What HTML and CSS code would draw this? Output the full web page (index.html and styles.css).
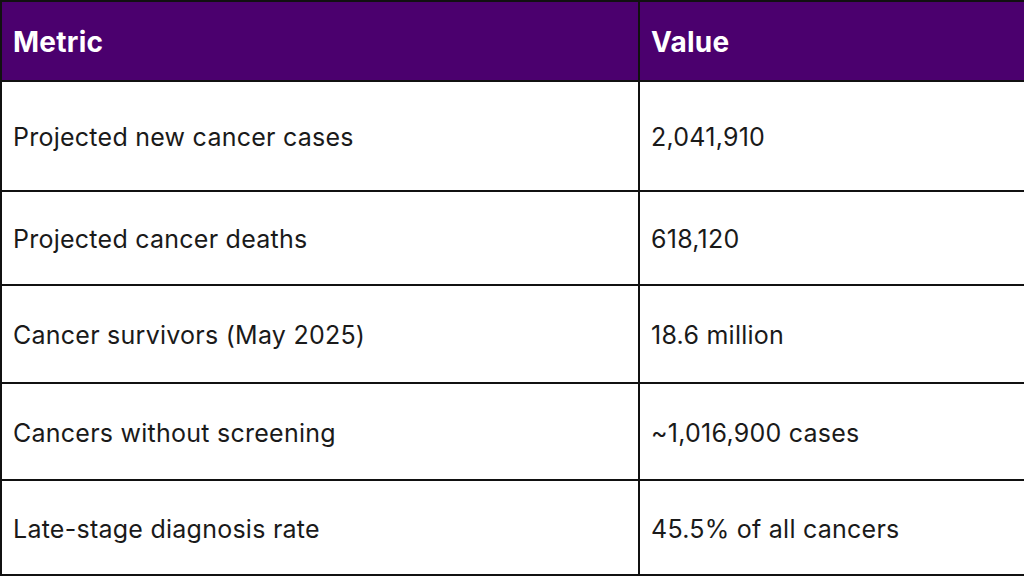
FILE: index.html
```html
<!DOCTYPE html>
<html lang="en">
<head>
<meta charset="utf-8">
<title>Cancer statistics</title>
<link rel="stylesheet" href="styles.css">
</head>
<body>
<table class="stats">
  <colgroup><col class="c1"><col class="c2"></colgroup>
  <thead>
    <tr class="head"><th>Metric</th><th>Value</th></tr>
  </thead>
  <tbody>
    <tr class="r1"><td>Projected new cancer cases</td><td>2,041,910</td></tr>
    <tr class="r2"><td>Projected cancer deaths</td><td>618,120</td></tr>
    <tr class="r3"><td>Cancer survivors (May 2025)</td><td>18.6 million</td></tr>
    <tr class="r4"><td>Cancers without screening</td><td>~1,016,900 cases</td></tr>
    <tr class="r5"><td>Late-stage diagnosis rate</td><td>45.5% of all cancers</td></tr>
  </tbody>
</table>
</body>
</html>
```
FILE: styles.css
```css
html, body {
  margin: 0;
  padding: 0;
  background: #ffffff;
}
body {
  width: 1024px;
  height: 576px;
  overflow: hidden;
  font-family: Inter, "Noto Sans", sans-serif;
}
.stats {
  width: 1024px;
  border-collapse: collapse;
  table-layout: fixed;
}
.c1 { width: 638px; }
.c2 { width: 386px; }
.stats th,
.stats td {
  border: 2px solid #111111;
  padding: 2px 11px 0;
  text-align: left;
  vertical-align: middle;
  letter-spacing: 0.25px;
}
.stats th {
  background: #4b006e;
  color: #ffffff;
  font-size: 28px;
  font-weight: 700;
}
.stats td {
  color: #1a1a1a;
  font-size: 25px;
  font-weight: 400;
}
.head { height: 80px; }
.r1 { height: 110px; }
.r2 { height: 94px; }
.r3 { height: 98px; }
.r4 { height: 97px; }
.r5 { height: 95px; }
```
